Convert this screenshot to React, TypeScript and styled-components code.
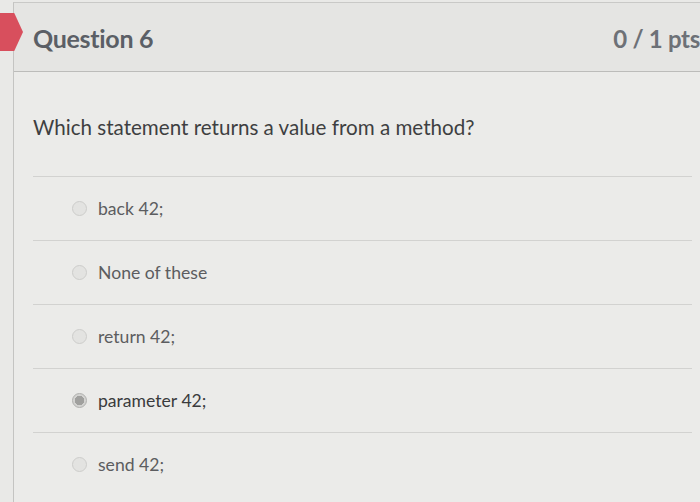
import React from "react";
import styled, { createGlobalStyle } from "styled-components";

const Global = createGlobalStyle`
  html, body { margin: 0; padding: 0; background: #e9e9e7; }
  body { font-family: Lato, "Open Sans", sans-serif; overflow: hidden; }
`;

const Page = styled.div`
  position: relative;
  width: 700px;
  height: 502px;
  overflow: hidden;
  background: #e9e9e7;
  padding-top: 2px;
  box-sizing: border-box;
`;

const Card = styled.div`
  margin-left: 13px;
  border-left: 1px solid #c4c4c2;
  border-top: 1px solid #c9c9c7;
  background: #ebebe9;
  height: 100%;
`;

const Header = styled.div`
  height: 68px;
  display: flex;
  align-items: center;
  justify-content: space-between;
  padding: 0 0 0 19px;
  background: #e5e5e3;
  border-bottom: 1px solid #bcbcba;
`;

const Title = styled.h2`
  margin: 0;
  font-size: 25px;
  font-weight: 700;
  color: #5b5f66;
  letter-spacing: -0.3px;
  padding-top: 2px;
`;

const Points = styled.span`
  font-size: 24px;
  font-weight: 700;
  color: #6d7177;
  white-space: nowrap;
  margin-right: 0;
  letter-spacing: -0.3px;
  padding-top: 2px;
`;

const Flag = styled.div`
  position: absolute;
  left: 0;
  top: 13px;
  width: 23px;
  height: 38px;
  background: #d84f5d;
  clip-path: polygon(0 0, 62% 0, 100% 50%, 62% 100%, 0 100%);
`;

const Body = styled.div`
  padding: 43px 8px 0 19px;
`;

const Prompt = styled.p`
  margin: 0;
  font-size: 20.6px;
  line-height: 24px;
  color: #3e3f41;
`;

const Options = styled.div`
  margin-top: 37px;
  display: flex;
  flex-direction: column;
`;

const Option = styled.label`
  height: 63px;
  border-top: 1px solid #d2d2d0;
  display: flex;
  align-items: center;
  gap: 11px;
  padding-left: 39px;
`;

const Radio = styled.span<{ $checked?: boolean }>`
  width: 15px;
  height: 15px;
  border-radius: 50%;
  box-sizing: border-box;
  border: 1px solid ${(p) => (p.$checked ? "#b0b0ae" : "#cdcdcb")};
  background: ${(p) =>
    p.$checked ? "radial-gradient(circle, #a0a09e 0 4.5px, #d3d3d1 5px)" : "#e3e3e1"};
  flex: none;
`;

const OptionText = styled.span<{ $checked?: boolean }>`
  font-size: 17.6px;
  color: ${(p) => (p.$checked ? "#3a3b3d" : "#5c5d60")};
`;

const options = ["back 42;", "None of these", "return 42;", "parameter 42;", "send 42;"];

export default function App() {
  return (
    <Page>
      <Global />
      <Card>
        <Header>
          <Title>Question 6</Title>
          <Points>0 / 1 pts</Points>
        </Header>
        <Body>
          <Prompt>Which statement returns a value from a method?</Prompt>
          <Options>
            {options.map((o, i) => (
              <Option key={o}>
                <Radio $checked={i === 3} />
                <OptionText $checked={i === 3}>{o}</OptionText>
              </Option>
            ))}
          </Options>
        </Body>
      </Card>
      <Flag />
    </Page>
  );
}
